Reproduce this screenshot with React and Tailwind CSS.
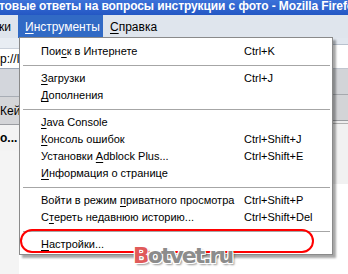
import React from "react";

const font = { fontFamily: '"Liberation Sans", Arial, sans-serif' };

function U({ children }) {
  return <span className="underline underline-offset-[2px]">{children}</span>;
}

const groups = [
  [{ label: <>Пои<U>с</U>к в Интернете</>, key: "Ctrl+K" }],
  [
    { label: <><U>З</U>агрузки</>, key: "Ctrl+J" },
    { label: <><U>Д</U>ополнения</>, key: "" },
  ],
  [
    { label: <><U>J</U>ava Console</>, key: "" },
    { label: <><U>К</U>онсоль ошибок</>, key: "Ctrl+Shift+J" },
    { label: <>Установки <U>A</U>dblock Plus...</>, key: "Ctrl+Shift+E" },
    { label: <><U>И</U>нформация о странице</>, key: "" },
  ],
  [
    { label: <>Войти в режим <U>п</U>риватного просмотра</>, key: "Ctrl+Shift+P" },
    { label: <>С<U>т</U>ереть недавнюю историю...</>, key: "Ctrl+Shift+Del" },
  ],
  [{ label: <><U>Н</U>астройки...</>, key: "" }],
];

function Menu() {
  return (
    <div className="absolute left-[19px] top-[37px] w-[314px] h-[218px] bg-white border border-[#8a8a8a] shadow-[3px_3px_2px_rgba(0,0,0,0.35)] pt-[5px] text-[11px] text-black">
      {groups.map((g, gi) => (
        <div key={gi}>
          {gi > 0 && (
            <div className="h-[10px] flex items-center pl-[3px] pr-[2px]">
              <div className="h-px w-full bg-[#a6a6a6]" />
            </div>
          )}
          {g.map((it, i) => (
            <div key={i} className="h-[17px] flex items-center">
              <span className="pl-[21px] w-[224px] whitespace-nowrap">{it.label}</span>
              <span className="whitespace-nowrap">{it.key}</span>
            </div>
          ))}
        </div>
      ))}
    </div>
  );
}

export default function App() {
  return (
    <div className="relative w-[348px] h-[274px] overflow-hidden bg-white" style={font}>
      {/* title bar */}
      <div className="h-[15px] bg-[linear-gradient(to_bottom,#3b72d9,#2457c4)] text-white font-bold text-[12px] leading-[13px] tracking-[-0.1px] whitespace-nowrap -ml-[1px] overflow-hidden">
        товые ответы на вопросы инструкции с фото - Mozilla Firefox
      </div>
      {/* menu bar */}
      <div className="h-[23px] bg-[#dfe5ed] flex items-center text-[12px] text-black">
        <span className="w-[19px] -ml-[1px]">ки</span>
        <span className="h-full flex items-center px-[7px] w-[85px] bg-[#316ac5] text-white">
          <U>И</U>нструменты
        </span>
        <span className="pl-[7px]">
          <U>С</U>правка
        </span>
      </div>
      {/* page behind */}
      <div className="flex h-[236px]">
        <div className="w-[19px] flex flex-col text-[12px] overflow-hidden">
          <div className="h-[11px] bg-[#e8edf3] border-b border-[#c9d0da]" />
          <div className="h-[20px] bg-white border-b border-[#9aa5b5] flex items-center whitespace-nowrap">p://l</div>
          <div className="h-[28px] bg-[#d3d6dc] border-b border-[#a8adb5]" />
          <div className="h-[28px] bg-[#d4d5d8] border-b border-[#9b9da2] flex items-center whitespace-nowrap">Кей</div>
          <div className="h-[26px] bg-[#f3f3f3] flex items-center font-bold whitespace-nowrap">о...</div>
          <div className="flex-1 bg-[#f4f4f4]" />
        </div>
        <div className="flex-1" />
        <div className="w-[15px] flex flex-col">
          <div className="h-[7px] bg-[#e1e7ef] border-b border-[#b9c2ce]" />
          <div className="h-[24px] bg-white border-b border-[#c0c6cf]" />
          <div className="h-[26px] bg-[#d2d4d8] border-b border-[#a6a9ae]" />
          <div className="h-[26px] bg-[#d3d4d7] border-b border-[#9a9ca0]" />
          <div className="h-[3px] bg-[#eeeeee] border-b border-[#b0b0b0]" />
          <div className="h-[60px] bg-[#f1f1f1]" />
          <div className="flex-1 bg-white" />
        </div>
      </div>
      <Menu />
      {/* red highlight */}
      <div className="absolute left-[20px] top-[229px] w-[294px] h-[24px] border-2 border-[#ff0000] rounded-full" />
      {/* watermark */}
      <div
        className="absolute left-[133px] top-[245px] text-[22px] font-bold leading-none tracking-[-2px] text-[#8c8c8c] [text-shadow:1px_1px_0_#fff,-1px_-1px_0_#fff,1px_-1px_0_#fff,-1px_1px_0_#fff,2px_2px_2px_rgba(0,0,0,0.4)]"
        style={{ fontFamily: '"DejaVu Sans", Verdana, sans-serif' }}
      >
        <span className="text-[#e05a5a]">B</span>otvet.ru
      </div>
    </div>
  );
}
